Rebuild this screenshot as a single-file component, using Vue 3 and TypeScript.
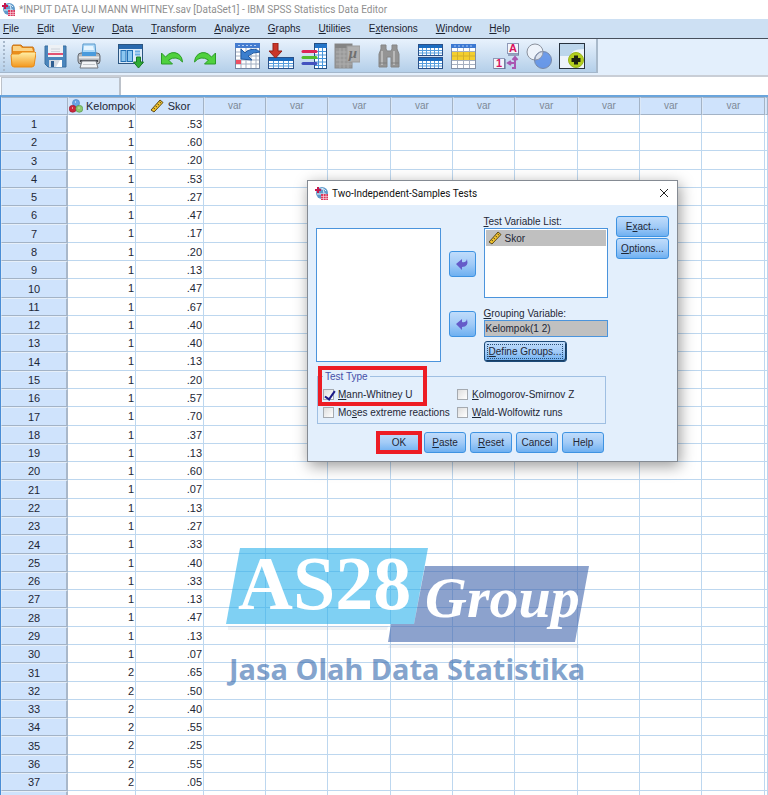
<script setup lang="ts">
import { ref } from 'vue'

interface Label {
  before: string
  key: string
  after: string
}

interface CaseRow {
  id: number
  kelompok: number
  skor: string
}

const menus: Label[] = [
  { before: '', key: 'F', after: 'ile' },
  { before: '', key: 'E', after: 'dit' },
  { before: '', key: 'V', after: 'iew' },
  { before: '', key: 'D', after: 'ata' },
  { before: '', key: 'T', after: 'ransform' },
  { before: '', key: 'A', after: 'nalyze' },
  { before: '', key: 'G', after: 'raphs' },
  { before: '', key: 'U', after: 'tilities' },
  { before: 'E', key: 'x', after: 'tensions' },
  { before: '', key: 'W', after: 'indow' },
  { before: '', key: 'H', after: 'elp' },
]

const scores: string[] = [
  '.53', '.60', '.20', '.53', '.27', '.47', '.17', '.20', '.13', '.47',
  '.67', '.40', '.40', '.13', '.20', '.57', '.70', '.37', '.13', '.60',
  '.07', '.13', '.27', '.33', '.40', '.33', '.13', '.47', '.13', '.07',
  '.65', '.50', '.40', '.55', '.25', '.55', '.05',
]

const rows: CaseRow[] = scores.map((skor, i) => ({
  id: i + 1,
  kelompok: i < 30 ? 1 : 2,
  skor,
}))

const emptyColumns = 9

const mannWhitney = ref(true)
const moses = ref(false)
const kolmogorov = ref(false)
const wald = ref(false)
const grouping = ref('Kelompok(1 2)')
const cellRef = ref('')
const cellValue = ref('')
</script>

<template>
  <div class="window">
    <header class="titlebar">
      <svg class="app-icon" viewBox="0 0 15 15" aria-hidden="true">
        <circle cx="8" cy="7" r="6" fill="#5f9acb" />
        <path d="M5 4q4-3 7 1M3 8h9M8 2q4 5 0 11" stroke="#e3f1fb" fill="none" />
        <path d="M4 1v6M1 4h6" stroke="#c5184d" stroke-width="2" />
        <rect x="7" y="8" width="7" height="6" fill="#d9385e" />
        <path d="M7 10.500h7M7 12.500h7M9.500 8v6M12 8v6" stroke="#fbe2e8" stroke-width=".6" />
      </svg>
      <span>*INPUT DATA UJI MANN WHITNEY.sav [DataSet1] - IBM SPSS Statistics Data Editor</span>
    </header>

    <nav class="menubar">
      <a v-for="m in menus" :key="m.key + m.after" href="#">{{ m.before }}<u>{{ m.key }}</u>{{ m.after }}</a>
    </nav>

    <div class="toolstrip">
      <div class="toolbar">
        <span class="grip"></span>
        <div class="group">
          <button type="button" aria-label="Open">
            <svg viewBox="0 0 26 26">
              <defs>
                <linearGradient id="fold" x1="0" y1="0" x2="0" y2="1"><stop offset="0" stop-color="#fff0a8" /><stop offset="1" stop-color="#f3971c" /></linearGradient>
              </defs>
              <path d="M2 22V4l1-2h8l2 2h10l1 2v15z" fill="#e98e1c" stroke="#c9741a" />
              <path d="M3 8h20l-1-3H12l-2-2H3z" fill="#fbd386" />
              <path d="M1 12l1-1h7l3-2h13l1 1-2 13-2 1H4l-2-1z" fill="url(#fold)" stroke="#e98b17" />
            </svg>
          </button>
          <button type="button" aria-label="Save">
            <svg viewBox="0 0 26 26">
              <path d="M2 3h21v21H5l-3-3z" fill="#4b86bd" stroke="#3a6e9f" />
              <rect x="5" y="2" width="15" height="12" fill="#eef1f5" />
              <rect x="5" y="10" width="15" height="2" fill="#e15273" />
              <path d="M8 6h9M8 8.500h9" stroke="#cdd2da" />
              <rect x="6" y="17" width="13" height="7" fill="#d5dbe3" />
              <rect x="8" y="18" width="3" height="6" fill="#2f5f92" />
              <path d="M13 24l4-7h2v7z" fill="#fff" />
            </svg>
          </button>
          <button type="button" aria-label="Print">
            <svg viewBox="0 0 26 26">
              <path d="M7 1h12l1 11H6z" fill="#aed9f7" stroke="#5a9acd" />
              <path d="M8 3h9l1 4H8z" fill="#e6f5ff" />
              <rect x="2" y="10" width="22" height="11" rx="3" fill="#b3b6ba" stroke="#666b72" />
              <path d="M6 9h14v4H6z" fill="#4a9bdc" />
              <path d="M3 14.500h20" stroke="#e8eaec" stroke-width="2" />
              <path d="M4 18h18" stroke="#464b52" stroke-width="2" />
              <path d="M6 18h14l2 7H4z" fill="#f3f5f7" stroke="#74797f" />
              <path d="M7 21.500h12" stroke="#c4c8cc" />
            </svg>
          </button>
        </div>
        <div class="group">
          <button type="button" aria-label="Recall recent dialogs">
            <svg viewBox="0 0 26 26">
              <rect x=".5" y="1.500" width="24" height="19" fill="#dcebfa" stroke="#2c5681" />
              <path d="M1 2h23v4H1z" fill="#2969ad" />
              <rect x="3" y="7.500" width="5" height="11" fill="#8cc7f0" stroke="#2270b5" />
              <rect x="9.500" y="7.500" width="5" height="11" fill="#8cc7f0" stroke="#2270b5" />
              <path d="M17 8.500h5M17 11.500h5" stroke="#6fb0e4" stroke-width="2" />
              <path d="M18.500 14h4v5h3l-5 6-5-6h3z" fill="#2fac35" stroke="#1a7824" />
            </svg>
          </button>
        </div>
        <div class="group">
          <button type="button" aria-label="Undo">
            <svg viewBox="0 0 26 26">
              <path d="M1.500 10v11h11l-4-4q8-5 14 2 0-5-4-8-7-4-13 3z" fill="#4fd13e" stroke="#2b9b28" />
            </svg>
          </button>
          <button type="button" aria-label="Redo">
            <svg viewBox="0 0 26 26">
              <path d="M22.500 10v11h-11l4-4q-8-5-14 2 0-5 4-8 7-4 13 3z" fill="#4fd13e" stroke="#2b9b28" />
            </svg>
          </button>
        </div>
        <div class="group">
          <button type="button" aria-label="Go to case">
            <svg viewBox="0 0 26 26">
              <rect x="1" y="1" width="23" height="24" fill="#fff" />
              <path d="M1 9h23M1 13h23M1 17h23M1 21h23M6 3v22M11 3v22M16 3v22M21 3v22" stroke="#a3afc2" />
              <rect x=".5" y="1.500" width="24" height="24" fill="none" stroke="#7486a2" />
              <rect x="0" y="0" width="25" height="5" fill="#447cd0" />
              <path d="M3 2.500h20" stroke="#b4cef3" stroke-dasharray="2 2" />
              <rect x="1" y="17" width="5" height="4" fill="#ee4f62" />
              <path d="M6 6v10l11 1-4-4q5-4 12-4-5-5-13-1l-2 2z" fill="#3c7fce" stroke="#205aa3" />
            </svg>
          </button>
          <button type="button" aria-label="Go to variable">
            <svg viewBox="0 0 26 26">
              <rect x=".5" y="14.500" width="25" height="11" fill="#fff" stroke="#2a518a" />
              <path d="M1 15h24v3H1z" fill="#1b6cc0" />
              <path d="M1 20.500h24M1 23h24M5.500 18v7M10.500 18v7M15.500 18v7M20.500 18v7" stroke="#559ddd" />
              <path d="M5 0h5v8h4l-6.500 7L1 8h4z" fill="#c93629" stroke="#932018" />
            </svg>
          </button>
          <button type="button" aria-label="Variables">
            <svg viewBox="0 0 26 26">
              <rect x="13.500" y=".5" width="12" height="25" fill="#fff" stroke="#254f82" />
              <path d="M14 1h12v4H14z" fill="#2374c8" />
              <path d="M14 8.500h11M14 12h11M14 15.500h11M14 19h11M14 22.500h11M17.500 5v20M21.500 5v20" stroke="#4695db" />
              <path d="M2 8.500h13" stroke="#dc2557" stroke-width="3" stroke-linecap="round" />
              <path d="M2 14.500h13" stroke="#52bc2f" stroke-width="3" stroke-linecap="round" />
              <path d="M2 20.500h13" stroke="#4452bf" stroke-width="3" stroke-linecap="round" />
            </svg>
          </button>
          <button type="button" aria-label="Run descriptive statistics">
            <svg viewBox="0 0 26 26">
              <rect x="1" y="1" width="17" height="24" fill="#999" stroke="#8a8a8a" />
              <path d="M1 3h17" stroke="#848484" stroke-width="4" />
              <path d="M2 9h16M2 13h16M2 17h16M2 21h16M6 5v20M10 5v20M14 5v20" stroke="#adadad" />
              <rect x="13" y="3" width="13" height="16" fill="#b0b0b0" stroke="#999" />
              <text x="19" y="15" text-anchor="middle" class="mu">μ</text>
            </svg>
          </button>
        </div>
        <div class="group">
          <button type="button" aria-label="Find">
            <svg viewBox="0 0 26 26">
              <path d="M5 2h5v4l1 2h4l1-2V2h5v4l2 5v13h-8V14h-4v10H3V11l2-5z" fill="#949494" stroke="#858585" />
              <path d="M6 8v14M18 8v14" stroke="#b9b9b9" stroke-width="2" />
              <path d="M3 20h8M15 20h8" stroke="#7f7f7f" />
            </svg>
          </button>
        </div>
        <div class="group">
          <button type="button" aria-label="Insert cases">
            <svg viewBox="0 0 26 26">
              <rect x=".5" y="1.500" width="24" height="11" fill="#fff" stroke="#2a518a" />
              <rect x=".5" y="14.500" width="24" height="11" fill="#fff" stroke="#2a518a" />
              <path d="M1 3.500h23M1 16.500h23" stroke="#1b6cc0" stroke-width="3" />
              <path d="M1 7.500h23M1 10h23M1 20.500h23M1 23h23M4.500 5v7M8.500 5v7M12.500 5v7M16.500 5v7M20.500 5v7M4.500 18v7M8.500 18v7M12.500 18v7M16.500 18v7M20.500 18v7" stroke="#559ddd" />
            </svg>
          </button>
          <button type="button" aria-label="Split file">
            <svg viewBox="0 0 26 26">
              <rect x=".5" y="1.500" width="24" height="24" fill="#fff" stroke="#8290a6" />
              <path d="M0 3h25" stroke="#3c79d2" stroke-width="4" />
              <path d="M3 3h20" stroke="#a8c9f5" stroke-dasharray="2 2" />
              <path d="M1 8.500h23M1 17.500h23M1 21.500h23M6.500 5v20M12.500 5v20M18.500 5v20" stroke="#a5afbf" />
              <rect x="1" y="9" width="23" height="8" fill="#f4cf2f" />
              <path d="M1 13h23M6.500 9v8M12.500 9v8M18.500 9v8" stroke="#d3b02a" />
            </svg>
          </button>
        </div>
        <div class="group">
          <button type="button" aria-label="Value labels">
            <svg viewBox="0 0 26 26">
              <rect x="14.500" y=".5" width="11" height="10" fill="#f4f5fb" stroke="#8f99b8" />
              <path d="M26 1v11H15" fill="none" stroke="#59648b" />
              <text x="20" y="9" text-anchor="middle" class="glyph">A</text>
              <rect x=".5" y="15.500" width="11" height="10" fill="#f4f5fb" stroke="#8f99b8" />
              <path d="M12 16v10H1" fill="none" stroke="#59648b" />
              <text x="6" y="24" text-anchor="middle" class="glyph">1</text>
              <path d="M22 14v11h-3M22 20h-7m3-2l-3 2 3 2M19.500 17l2.500-3 2.500 3" fill="none" stroke="#a957b1" stroke-width="2" />
            </svg>
          </button>
          <button type="button" aria-label="Use variable sets">
            <svg viewBox="0 0 26 26">
              <circle cx="9" cy="9" r="8" fill="#edf3fb" stroke="#8b929e" />
              <circle cx="17" cy="17" r="8.500" fill="#4680e4" fill-opacity=".72" stroke="#7888a7" />
              <path d="M17 8.500a8 8 0 0 1-8 8.500 8.500 8.500 0 0 1 8-8.500" fill="#dbe2ee" stroke="#929aac" />
            </svg>
          </button>
          <button type="button" aria-label="Show all variables">
            <svg viewBox="0 0 26 26">
              <rect x=".5" y=".5" width="25" height="25" fill="#eef4fb" stroke="#27323e" />
              <path d="M1 1h24v5Q12 6 12 13H1z" fill="#bcd6ec" />
              <circle cx="17" cy="17" r="7.500" fill="#b4cf1e" stroke="#98b51c" />
              <path d="M17 12.500v9M12.500 17h9" stroke="#1e2311" stroke-width="4" />
            </svg>
          </button>
        </div>
      </div>
    </div>

    <div class="cellbar">
      <input v-model="cellRef" class="cell-ref" aria-label="Cell reference" readonly />
      <input v-model="cellValue" class="cell-value" aria-label="Cell value" />
    </div>

    <main class="workspace">
      <table class="data">
        <colgroup>
          <col class="c-num" />
          <col class="c-data" />
          <col class="c-data" />
          <col v-for="n in emptyColumns" :key="n" :class="n % 3 === 0 ? 'c-wide' : 'c-var'" />
          <col />
        </colgroup>
        <thead>
          <tr>
            <th class="corner"></th>
            <th scope="col">
              <div class="head">
                <svg class="nominal" viewBox="0 0 14 14" aria-hidden="true">
                  <circle cx="7" cy="4" r="3.500" fill="#6aa5e6" stroke="#3e7dc3" stroke-width=".6" />
                  <circle cx="3.700" cy="9.800" r="3.500" fill="#cc263c" stroke="#96182b" stroke-width=".6" />
                  <circle cx="10.300" cy="9.800" r="3.500" fill="#8ec870" stroke="#4a9142" stroke-width=".6" />
                  <path d="M6 3h1M3 9h1M9.500 9h1" stroke="#fff" />
                </svg>
                <span>Kelompok</span>
              </div>
            </th>
            <th scope="col">
              <div class="head scale-head">
                <svg class="ruler" viewBox="0 0 14 14" aria-hidden="true">
                  <path d="M1 11L10 1l3 2.500L4 13z" fill="#f2c42c" stroke="#5d4a1b" />
                  <path d="M3.500 9l1.500 1M5.500 7L7 8M7.500 5L9 6M9.500 3L11 4" stroke="#5d4a1b" />
                </svg>
                <span>Skor</span>
              </div>
            </th>
            <th v-for="n in emptyColumns" :key="n" scope="col" class="var">var</th>
            <th></th>
          </tr>
        </thead>
        <tbody>
          <tr v-for="r in rows" :key="r.id">
            <th scope="row">{{ r.id }}</th>
            <td>{{ r.kelompok }}</td>
            <td>{{ r.skor }}</td>
            <td v-for="n in emptyColumns + 1" :key="n"></td>
          </tr>
          <tr>
            <th></th>
            <td v-for="n in emptyColumns + 3" :key="n"></td>
          </tr>
        </tbody>
      </table>

      <div class="brand">
        <svg viewBox="0 0 366 98" role="img" aria-label="AS28 Group">
          <path d="M2 78h160l-1 4H2zM164 96h188l1 4H162z" fill="#8b93a5" fill-opacity=".12" />
          <path d="M14 0h188l-14 76H0z" fill="#2ab1eb" fill-opacity=".6" />
          <path d="M199 18h164l-14 76H162l3-18h23z" fill="#3f64ac" fill-opacity=".6" />
          <text x="12" y="61" class="brand-as">AS28</text>
          <text x="199" y="69" class="brand-group">Group</text>
        </svg>
        <p>Jasa Olah Data Statistika</p>
      </div>

      <section class="dialog" role="dialog" aria-labelledby="dlg-title">
        <div class="dlg-title">
          <svg class="app-icon" viewBox="0 0 15 15" aria-hidden="true">
            <circle cx="8" cy="7" r="6" fill="#5f9acb" />
            <path d="M5 4q4-3 7 1M3 8h9M8 2q4 5 0 11" stroke="#e3f1fb" fill="none" />
            <path d="M4 1v6M1 4h6" stroke="#c5184d" stroke-width="2" />
            <rect x="7" y="8" width="7" height="6" fill="#d9385e" />
            <path d="M7 10.500h7M7 12.500h7M9.500 8v6M12 8v6" stroke="#fbe2e8" stroke-width=".6" />
          </svg>
          <span id="dlg-title">Two-Independent-Samples Tests</span>
          <button type="button" class="close" aria-label="Close">
            <svg viewBox="0 0 10 10"><path d="M1 1l8 8M9 1L1 9" stroke="#222" fill="none" /></svg>
          </button>
        </div>

        <div class="dlg-body">
          <div class="pickers">
            <div class="source" role="listbox" aria-label="Variables"></div>
            <div class="arrows">
              <button type="button" class="btn arrow" aria-label="Move to test variable list">
                <svg viewBox="0 0 14 12"><path d="M1 6l6-5v3q4 1 5-3 2 8-5 8v3z" fill="#655bc9" /></svg>
              </button>
              <button type="button" class="btn arrow" aria-label="Move to grouping variable">
                <svg viewBox="0 0 14 12"><path d="M1 6l6-5v3q4 1 5-3 2 8-5 8v3z" fill="#655bc9" /></svg>
              </button>
            </div>
            <div class="targets">
              <span id="tvl" class="caption"><u>T</u>est Variable List:</span>
              <div class="target-list" role="listbox" aria-labelledby="tvl">
                <div class="option" role="option" aria-selected="true">
                  <svg class="ruler" viewBox="0 0 14 14" aria-hidden="true">
                    <path d="M1 11L10 1l3 2.500L4 13z" fill="#f2c42c" stroke="#5d4a1b" />
                    <path d="M3.500 9l1.500 1M5.500 7L7 8M7.500 5L9 6M9.500 3L11 4" stroke="#5d4a1b" />
                  </svg>
                  <span>Skor</span>
                </div>
              </div>
              <label class="caption" for="grouping"><u>G</u>rouping Variable:</label>
              <input id="grouping" v-model="grouping" class="grouping" readonly />
              <button type="button" class="btn define"><span><u>D</u>efine Groups...</span></button>
            </div>
            <div class="side">
              <button type="button" class="btn">E<u>x</u>act...</button>
              <button type="button" class="btn"><u>O</u>ptions...</button>
            </div>
          </div>

          <fieldset class="types">
            <legend>Test Type</legend>
            <label><input v-model="mannWhitney" type="checkbox" /><span><u>M</u>ann-Whitney U</span></label>
            <label><input v-model="kolmogorov" type="checkbox" /><span><u>K</u>olmogorov-Smirnov Z</span></label>
            <label><input v-model="moses" type="checkbox" /><span>Mo<u>s</u>es extreme reactions</span></label>
            <label><input v-model="wald" type="checkbox" /><span><u>W</u>ald-Wolfowitz runs</span></label>
            <span class="mark mark-test"></span>
          </fieldset>

          <div class="actions">
            <button type="button" class="btn ok">OK<span class="mark mark-ok"></span></button>
            <button type="button" class="btn"><u>P</u>aste</button>
            <button type="button" class="btn"><u>R</u>eset</button>
            <button type="button" class="btn">Cancel</button>
            <button type="button" class="btn">Help</button>
          </div>
        </div>
      </section>
    </main>
  </div>
</template>

<style>
body {
  background: #fff;
}
</style>

<style scoped>
* {
  box-sizing: border-box;
}

.window {
  display: flex;
  flex-direction: column;
  height: 100vh;
  overflow: hidden;
  color: #1e2736;
  font-family: "Liberation Sans", Arial, sans-serif;
  font-size: 10px;
}

button,
input {
  margin: 0;
  color: inherit;
  font: inherit;
}

svg {
  display: block;
}

.titlebar {
  display: flex;
  flex: none;
  align-items: center;
  gap: 3px;
  height: 19px;
  padding-left: 1px;
  color: #8f8f8f;
  font-family: Roboto, "Open Sans", sans-serif;
}

.app-icon {
  flex: none;
  width: 15px;
  height: 15px;
}

.menubar {
  display: flex;
  flex: none;
  align-items: center;
  gap: 18px;
  height: 20px;
  padding-left: 3px;
  border-bottom: 1px solid #47505c;
  background: #cde0f3;
}

.menubar a {
  color: #1b2330;
  text-decoration: none;
}

.toolstrip {
  display: flex;
  flex: none;
  height: 38px;
  padding-bottom: 2px;
  border-bottom: 2px solid #c9ced6;
  background: #e3effc;
}

.toolbar {
  display: flex;
  align-items: center;
  gap: 16px;
  padding-right: 11px;
  border-right: 2px solid #a9bacb;
  border-bottom: 1px solid #a3b7cc;
  background: linear-gradient(#e8f2fd, #b4cfe9);
}

.grip {
  width: 2px;
  height: 30px;
  margin: 0 -11px 0 3px;
  border-left: 2px dotted #a7b8cb;
}

.group {
  display: flex;
  gap: 7px;
}

.group button {
  width: 26px;
  height: 26px;
  padding: 0;
  border: 0;
  background: none;
}

.glyph {
  fill: #d8135d;
  font: bold 11px "Liberation Sans", sans-serif;
}

.mu {
  fill: #6f6f6f;
  font: italic bold 15px "Liberation Serif", serif;
}

.cellbar {
  display: flex;
  flex: none;
  height: 18px;
  padding-left: 1px;
}

.cellbar input {
  border: 1px solid #bcc2ca;
  border-right-width: 2px;
  border-bottom: 0;
}

.cellbar .cell-ref {
  width: 118px;
  border-right: 0;
  background: #e3effc;
}

.cellbar .cell-value {
  flex: 1;
  min-width: 0;
  border-width: 0 0 0 2px;
  background: #fff;
}

.workspace {
  position: relative;
  flex: 1;
  min-height: 0;
  overflow: hidden;
  border-top: 2px solid #6aa5dc;
  border-left: 1px solid #4a8dd6;
}

.data {
  width: 100%;
  border-spacing: 0;
  table-layout: fixed;
  font-size: 11px;
  line-height: 16px;
}

.c-num {
  width: 67px;
}

.c-data {
  width: 68px;
}

.c-var {
  width: 62px;
}

.c-wide {
  width: 63px;
}

.data th,
.data td {
  height: 18px;
  padding: 0;
  overflow: hidden;
  white-space: nowrap;
}

.data tbody tr:nth-child(7n + 3) > *,
.data tbody tr:nth-child(7n) > * {
  height: 19px;
}

.data th {
  border: 1px solid #a3b3c6;
  border-top-color: #e6eff9;
  border-left-color: #dbe8f7;
  background: #cfe3fc;
  font-weight: normal;
}

.data thead th {
  border-top-color: #a3b3c6;
}

.data thead .var {
  color: #7e8996;
  font-size: 10px;
}

.data tbody th {
  border-right: 2px solid #a9b8ca;
}

.data td {
  padding-right: 1px;
  border-right: 1px solid #bdd7ef;
  border-bottom: 1px solid #bdd7ef;
  background: #fff;
  text-align: right;
}

.head {
  display: flex;
  align-items: center;
  justify-content: center;
  gap: 3px;
}

.scale-head {
  gap: 4px;
}

.nominal,
.ruler {
  flex: none;
  width: 14px;
  height: 14px;
}

.brand {
  position: absolute;
  top: 451px;
  left: 225px;
  width: 366px;
}

.brand svg {
  overflow: visible;
}

.brand p {
  margin: 3px 0 0 3px;
  color: rgba(49, 103, 172, 0.6);
  font: bold 29px/40px "Noto Sans", "Open Sans", sans-serif;
  white-space: nowrap;
}

.brand-as {
  fill: #fff;
  font: bold 76px "Liberation Serif", serif;
}

.brand-group {
  fill: #fff;
  font: italic bold 58px "Liberation Serif", serif;
}

.dialog {
  position: absolute;
  top: 83px;
  left: 306px;
  width: 371px;
  border: 1px solid #858b93;
  background: #e3effc;
  box-shadow: 2px 4px 14px rgba(0, 0, 0, 0.4);
}

.dlg-title {
  display: flex;
  align-items: center;
  gap: 3px;
  height: 24px;
  padding: 0 8px 0 6px;
  background: #fff;
  color: #111;
  font-family: Roboto, "Open Sans", sans-serif;
}

.close {
  width: 10px;
  height: 10px;
  margin-left: auto;
  padding: 0;
  border: 0;
  background: none;
}

.dlg-body {
  padding: 10px 8px 8px;
}

.pickers {
  display: grid;
  grid-template-columns: 1fr 27px 1fr 53px;
  gap: 8px;
}

.source,
.target-list {
  border: 1px solid #4b94dc;
  background: #fff;
}

.source {
  margin-top: 13px;
}

.arrows {
  display: flex;
  flex-direction: column;
  gap: 34px;
  padding-top: 36px;
}

.btn {
  position: relative;
  display: flex;
  align-items: center;
  justify-content: center;
  height: 21px;
  padding: 0;
  border: 1px solid #3e93e2;
  border-radius: 3px;
  background: linear-gradient(#c0dcfb, #a2cbf7 50%, #6eb0f1);
  white-space: nowrap;
}

.btn.arrow {
  height: 26px;
}

.arrow svg {
  width: 14px;
  height: 12px;
}

.targets {
  display: flex;
  flex-direction: column;
}

.caption {
  height: 13px;
  line-height: 13px;
}

.target-list {
  height: 70px;
  margin-bottom: 9px;
  padding: 1px;
}

.option {
  display: flex;
  align-items: center;
  gap: 3px;
  height: 16px;
  padding-left: 2px;
  background: #c0c0c0;
}

.grouping {
  width: 100%;
  height: 17px;
  padding: 0 1px;
  border: 1px solid #4b94dc;
  background: #c0c0c0;
}

.define {
  align-self: flex-start;
  width: 83px;
  margin-top: 4px;
  border-color: #1c4a78;
  box-shadow: inset -1px -1px 0 #173c62;
}

.define span {
  padding: 1px;
  border: 1px dotted #294d75;
}

.side {
  display: flex;
  flex-direction: column;
  gap: 1px;
  padding-top: 1px;
}

.types {
  position: relative;
  display: grid;
  grid-template-columns: 134px 1fr;
  row-gap: 4px;
  width: 289px;
  margin: 8px 0 0 1px;
  padding: 4px 5px;
  border: 1px solid #9fbfe2;
}

.types legend {
  height: 13px;
  padding: 0 2px;
  color: #4650a8;
  line-height: 13px;
}

.types label {
  display: flex;
  align-items: center;
  gap: 4px;
  height: 14px;
  white-space: nowrap;
}

.types input {
  position: relative;
  flex: none;
  width: 11px;
  height: 11px;
  border: 1px solid #a5aab0;
  background: linear-gradient(135deg, #dedede, #fff);
  appearance: none;
}

.types input:checked::after {
  position: absolute;
  top: -1px;
  left: 3px;
  width: 4px;
  height: 9px;
  border: solid #1b1b88;
  border-width: 0 2px 2px 0;
  content: "";
  transform: rotate(35deg);
}

.mark {
  position: absolute;
  border: 4px solid #ed1c24;
  pointer-events: none;
}

.mark-test {
  top: -17px;
  left: 0;
  width: 109px;
  height: 40px;
}

.mark-ok {
  inset: -2px -3px;
}

.actions {
  display: grid;
  grid-template-columns: repeat(5, 42px);
  gap: 4px;
  margin: 8px 0 0 62px;
}
</style>
